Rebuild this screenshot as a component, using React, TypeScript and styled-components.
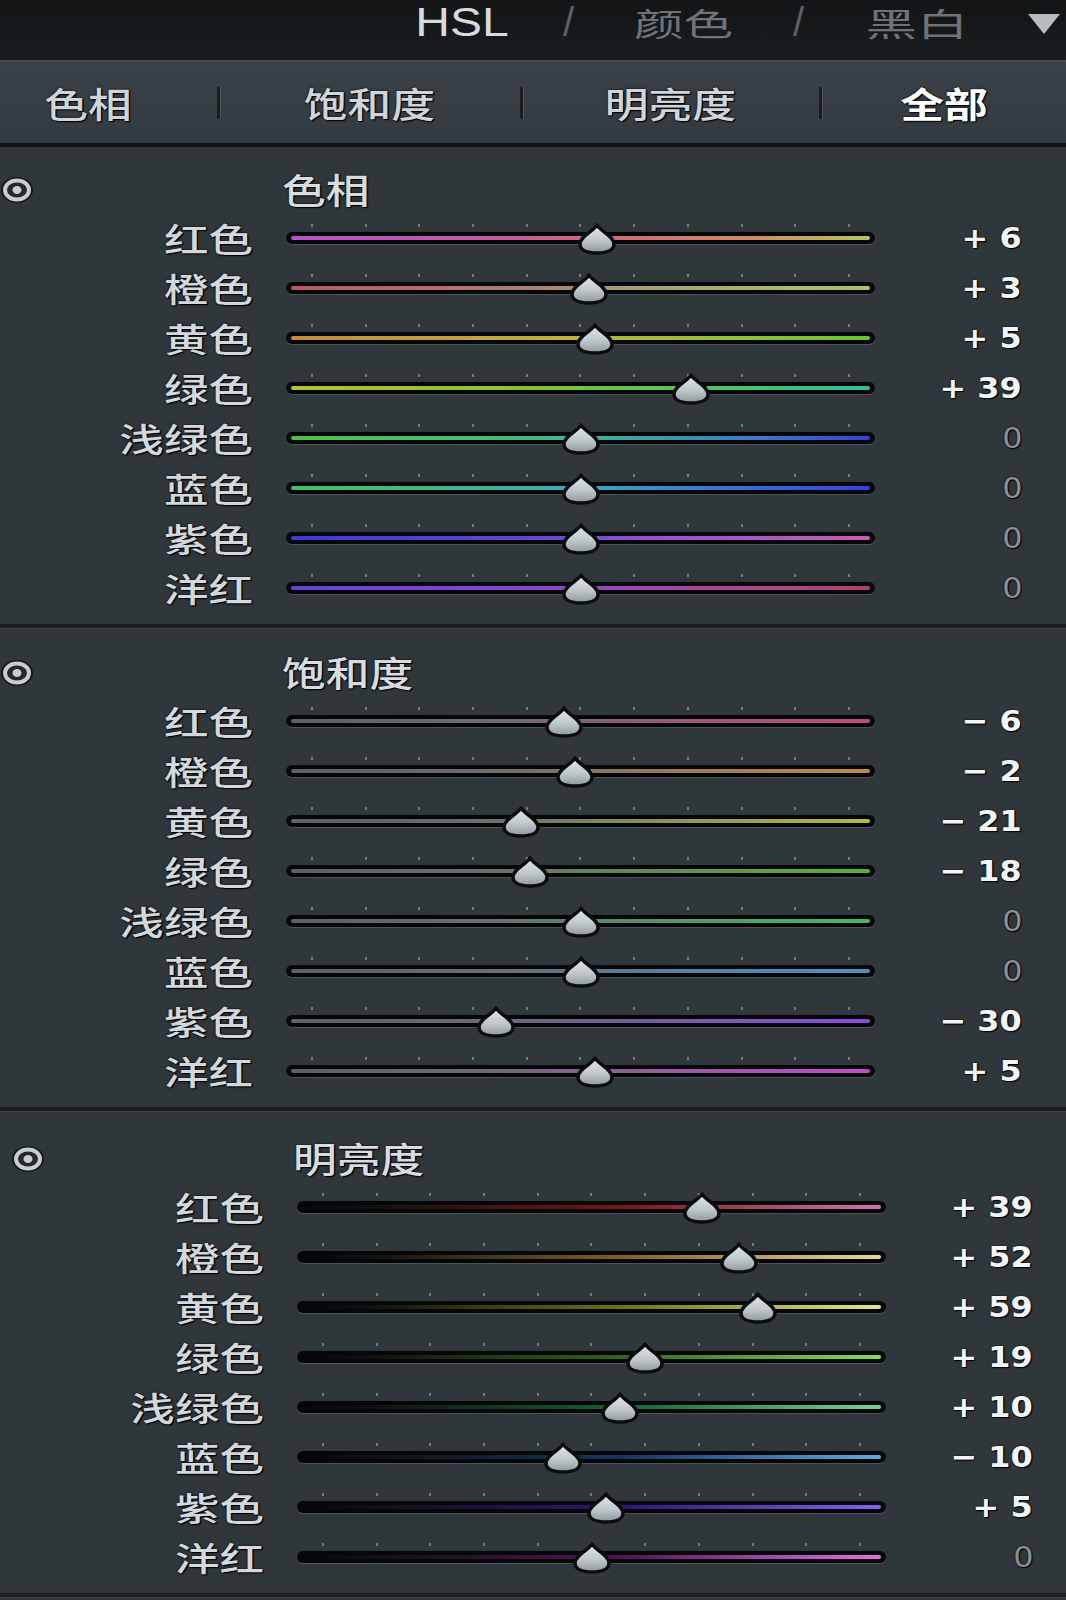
import styled, { createGlobalStyle } from "styled-components";

const cjk = `"Noto Sans CJK SC", "Noto Sans", sans-serif`;
const num = `"DejaVu Sans", "Liberation Sans", sans-serif`;

type Row = { name: string; value: number; track: string };
type Section = { title: string; shift: number; top: number; rows: Row[] };

const hue: Row[] = [
  { name: "红色", value: 6, track: "linear-gradient(90deg, #b652c8 0%, #c25c9e 35%, #cf6a78 55%, #d08c64 80%, #b6c45a 100%)" },
  { name: "橙色", value: 3, track: "linear-gradient(90deg, #b85868 0%, #ac7e70 40%, #a8a06c 60%, #a8c46c 100%)" },
  { name: "黄色", value: 5, track: "linear-gradient(90deg, #c48a3e 0%, #c2ae40 45%, #9cc038 70%, #6cc432 100%)" },
  { name: "绿色", value: 39, track: "linear-gradient(90deg, #b4c232 0%, #86c23a 40%, #4cc260 75%, #32c0a4 100%)" },
  { name: "浅绿色", value: 0, track: "linear-gradient(90deg, #52c442 0%, #44b490 50%, #3c7ac8 80%, #3442d6 100%)" },
  { name: "蓝色", value: 0, track: "linear-gradient(90deg, #42c45e 0%, #3eaab8 50%, #3a70d8 75%, #3244e2 100%)" },
  { name: "紫色", value: 0, track: "linear-gradient(90deg, #3c3cd4 0%, #6244d6 40%, #9c52d4 65%, #c45eb4 100%)" },
  { name: "洋红", value: 0, track: "linear-gradient(90deg, #6a42da 0%, #8a46cc 45%, #a8449a 70%, #b04270 100%)" },
];

const satColors = ["#c44a7c", "#c48a42", "#b2ba42", "#5ab232", "#42ba6a", "#4a92ca", "#8a4ae2", "#c44acc"];
const satValues = [-6, -2, -21, -18, 0, 0, -30, 5];

const lumStops = [
  ["#7c1414", "#d472ac"],
  ["#80601e", "#e8d8a0"],
  ["#727012", "#e6e690"],
  ["#346414", "#84e054"],
  ["#126232", "#72d494"],
  ["#143462", "#62aadc"],
  ["#34127a", "#8462ea"],
  ["#541254", "#e272e2"],
];
const lumValues = [39, 52, 59, 19, 10, -10, 5, 0];

const names = hue.map((r) => r.name);

const sections: Section[] = [
  { title: "色相", shift: 0, top: 16, rows: hue },
  {
    title: "饱和度",
    shift: 0,
    top: 18,
    rows: names.map((name, i) => ({
      name,
      value: satValues[i],
      track: `linear-gradient(90deg, #5a6064 0%, #6a6c70 30%, ${satColors[i]} 100%)`,
    })),
  },
  {
    title: "明亮度",
    shift: 11,
    top: 21,
    rows: names.map((name, i) => ({
      name,
      value: lumValues[i],
      track: `linear-gradient(90deg, #060606 0%, #111 12%, ${lumStops[i][0]} 55%, ${lumStops[i][1]} 100%)`,
    })),
  },
];

function formatValue(v: number) {
  if (v > 0) return `+ ${v}`;
  if (v < 0) return `\u2212 ${Math.abs(v)}`;
  return "0";
}

export default function App() {
  return (
    <>
      <GlobalStyle />
      <Panel>
        <Header>
          <HeadItem $w={92} $scale={1.2} $bright>
            HSL
          </HeadItem>
          <HeadItem $w={17}>/</HeadItem>
          <HeadItem $w={109} $scale={1.55} $cjk>
            颜色
          </HeadItem>
          <HeadItem $w={17}>/</HeadItem>
          <HeadItem $w={116} $scale={1.6} $cjk>
            黑白
          </HeadItem>
          <Triangle width="34" height="22" viewBox="0 0 34 22">
            <polygon points="1,1 33,1 17,21" fill="#b4bcc0" />
          </Triangle>
        </Header>

        <Tabs>
          <Tab $w={217} $padRight={40}>
            <TabText>色相</TabText>
          </Tab>
          <TabDivider />
          <Tab $w={300}>
            <TabText>饱和度</TabText>
          </Tab>
          <TabDivider />
          <Tab $w={296}>
            <TabText>明亮度</TabText>
          </Tab>
          <TabDivider />
          <Tab $w={244}>
            <TabText $active>全部</TabText>
          </Tab>
        </Tabs>

        {sections.map((s) => (
          <SectionBox key={s.title} $shift={s.shift} $top={s.top}>
            <TitleRow>
              <Eye width="34" height="28" viewBox="0 0 34 28">
                <ellipse cx="17" cy="14" rx="16" ry="13" fill="#15191b" />
                <ellipse cx="17" cy="14" rx="12" ry="9.5" fill="#23292c" stroke="#c6ced2" strokeWidth="4" />
                <ellipse cx="17" cy="14" rx="4.5" ry="4" fill="#c6ced2" />
              </Eye>
              <Title>{s.title}</Title>
            </TitleRow>
            {s.rows.map((r) => (
              <SliderRow key={r.name}>
                <LabelCell>
                  <Label>{r.name}</Label>
                </LabelCell>
                <Track>
                  <Ticks>
                    {Array.from({ length: 11 }).map((_, i) => (
                      <Tick key={i} />
                    ))}
                  </Ticks>
                  <Bar>
                    <Fill style={{ background: r.track }} />
                  </Bar>
                  <Thumb
                    width="40"
                    height="32"
                    viewBox="0 0 40 32"
                    style={{ left: `${50 + r.value * 0.48}%` }}
                  >
                    <defs>
                      <linearGradient id="knob" x1="0" y1="0" x2="0" y2="1">
                        <stop offset="0" stopColor="#e4eaec" />
                        <stop offset="0.55" stopColor="#bec7cb" />
                        <stop offset="1" stopColor="#8e989c" />
                      </linearGradient>
                    </defs>
                    <path
                      d="M20 2 C23 8 37 13 37 21 C37 27 30 30 20 30 C10 30 3 27 3 21 C3 13 17 8 20 2 Z"
                      fill="url(#knob)"
                      stroke="#0a0c0d"
                      strokeWidth="3.5"
                      strokeLinejoin="round"
                    />
                  </Thumb>
                </Track>
                <ValueCell>
                  <Value $zero={r.value === 0}>{formatValue(r.value)}</Value>
                </ValueCell>
              </SliderRow>
            ))}
          </SectionBox>
        ))}
      </Panel>
    </>
  );
}

const GlobalStyle = createGlobalStyle`
  html, body {
    margin: 0;
    padding: 0;
    background: #30373b;
  }
  body {
    font-family: ${cjk};
  }
`;

const Panel = styled.div`
  width: 1066px;
  min-height: 1600px;
  background: #30373b;
  overflow: hidden;
`;

const Header = styled.header`
  height: 60px;
  box-sizing: border-box;
  padding: 1px 5px 0 0;
  background: linear-gradient(180deg, #121416 0%, #1a1d1f 100%);
  display: flex;
  justify-content: flex-end;
  align-items: flex-start;
  gap: 52px;
`;

const HeadItem = styled.span<{ $w: number; $scale?: number; $cjk?: boolean; $bright?: boolean }>`
  display: inline-block;
  width: ${(p) => p.$w}px;
  text-align: center;
  font-family: ${(p) => (p.$cjk ? cjk : `"Liberation Sans", sans-serif`)};
  font-size: ${(p) => (p.$cjk ? 32 : 40)}px;
  line-height: 42px;
  color: ${(p) => (p.$bright ? "#d6dcde" : p.$cjk ? "#6c7478" : "#5a6266")};
  transform: scaleX(${(p) => p.$scale ?? 1});
  white-space: nowrap;
`;

const Triangle = styled.svg`
  margin-top: 12px;
  flex: none;
`;

const Tabs = styled.nav`
  height: 81px;
  border-top: 2px solid #454d52;
  border-bottom: 4px solid #111416;
  background: linear-gradient(180deg, #3a4247 0%, #343b40 100%);
  display: flex;
  align-items: center;
`;

const Tab = styled.div<{ $w: number; $padRight?: number }>`
  width: ${(p) => p.$w}px;
  padding-right: ${(p) => p.$padRight ?? 0}px;
  box-sizing: border-box;
  display: flex;
  justify-content: center;
`;

const TabText = styled.span<{ $active?: boolean }>`
  display: inline-block;
  font-family: ${cjk};
  font-size: 35px;
  font-weight: ${(p) => (p.$active ? 700 : 500)};
  color: ${(p) => (p.$active ? "#ffffff" : "#cfd5d8")};
  transform: scaleX(1.25);
  text-shadow: 0 0 2px #000, 1px 1px 1px #000;
`;

const TabDivider = styled.div`
  width: 3px;
  height: 32px;
  background: #1a1e21;
  box-shadow: 1px 0 0 #4a5257;
`;

const SectionBox = styled.section<{ $shift: number; $top: number }>`
  padding: ${(p) => p.$top}px 0 11px ${(p) => p.$shift}px;
  border-bottom: 4px solid #191d20;
  box-shadow: 0 1px 0 #3a4247;
`;

const TitleRow = styled.div`
  height: 50px;
  display: flex;
  align-items: center;
`;

const Eye = styled.svg`
  flex: none;
  margin-top: 3px;
`;

const Title = styled.span`
  display: inline-block;
  margin-left: 248px;
  font-size: 35px;
  font-weight: 500;
  color: #d6dcdf;
  transform: scaleX(1.25);
  transform-origin: left center;
  text-shadow: 0 0 2px #000, 1px 1px 1px #000;
`;

const SliderRow = styled.div`
  height: 50px;
  display: grid;
  grid-template-columns: 253px 589px 114px;
  column-gap: 33px;
  align-items: center;
`;

const LabelCell = styled.div`
  text-align: right;
`;

const Label = styled.span`
  display: inline-block;
  font-size: 33px;
  font-weight: 500;
  line-height: 50px;
  color: #d2d8db;
  transform: scaleX(1.35);
  transform-origin: right center;
  text-shadow: 0 0 2px #000, 1px 1px 1px #000;
`;

const Track = styled.div`
  position: relative;
  height: 50px;
  display: flex;
  align-items: center;
`;

const Ticks = styled.div`
  position: absolute;
  left: 25px;
  right: 25px;
  top: 11px;
  display: flex;
  justify-content: space-between;
`;

const Tick = styled.span`
  width: 2px;
  height: 3px;
  background: #737b80;
`;

const Bar = styled.div`
  width: 100%;
  height: 12px;
  box-sizing: border-box;
  padding: 4px 5px;
  border-radius: 6px;
  background: #060708;
  box-shadow: 0 1px 0 rgba(150, 160, 165, 0.28);
`;

const Fill = styled.div`
  height: 4px;
  border-radius: 2px;
`;

const Thumb = styled.svg`
  position: absolute;
  top: 10px;
  transform: translateX(-50%);
`;

const ValueCell = styled.div`
  text-align: right;
`;

const Value = styled.span<{ $zero: boolean }>`
  display: inline-block;
  font-family: ${num};
  font-size: 29px;
  font-weight: ${(p) => (p.$zero ? 400 : 700)};
  line-height: 50px;
  color: ${(p) => (p.$zero ? "#899195" : "#f2f5f6")};
  white-space: pre;
  transform: scaleX(1.1);
  transform-origin: right center;
  text-shadow: 0 0 2px #000, 1px 1px 1px #000;
`;
